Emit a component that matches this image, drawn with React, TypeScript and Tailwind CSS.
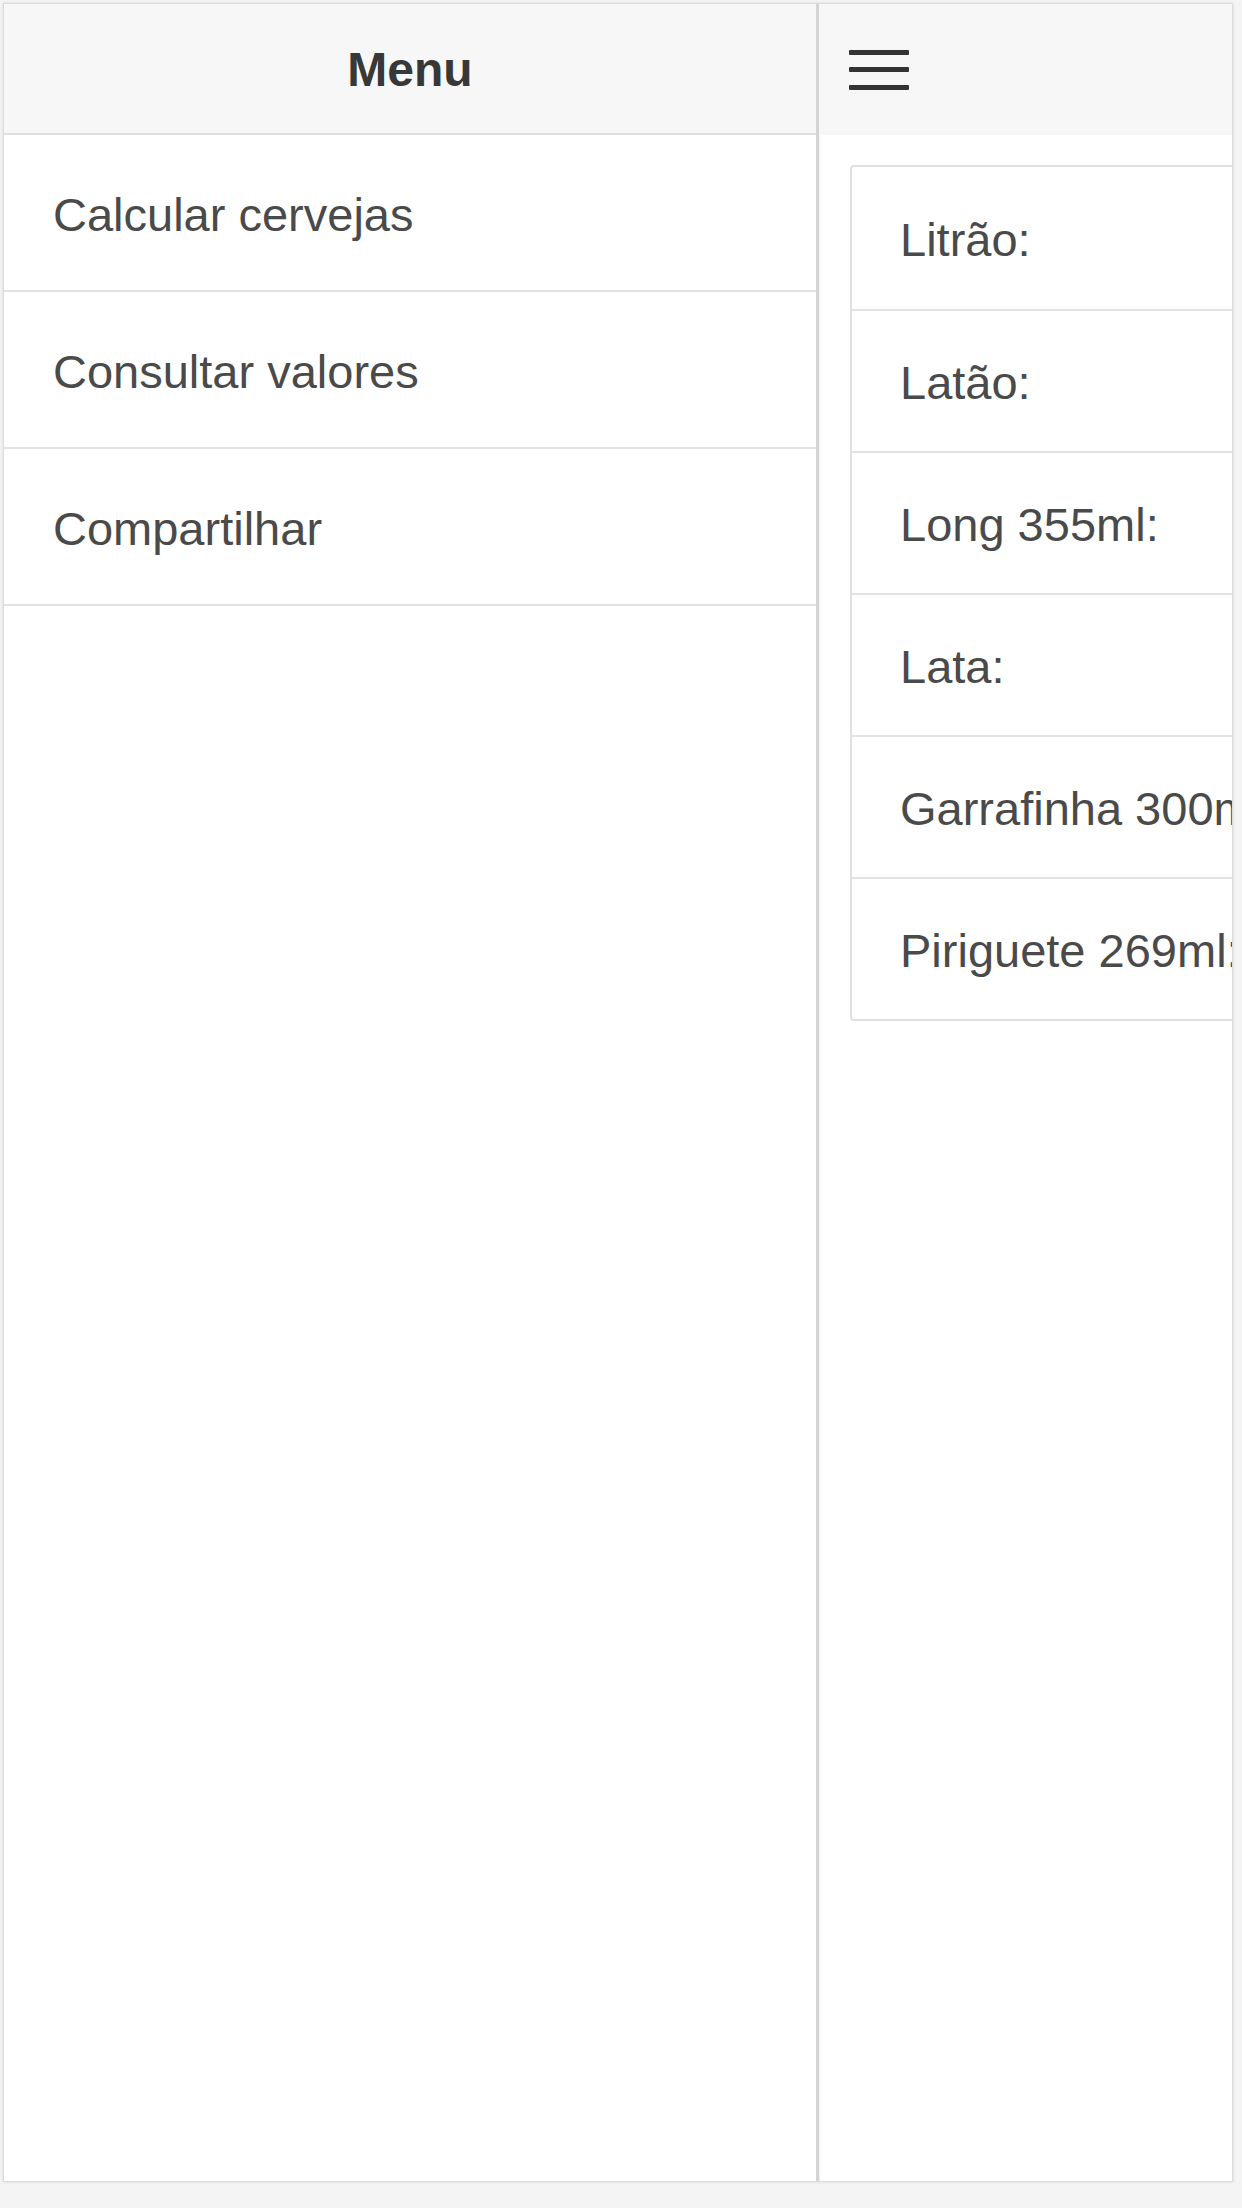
import { useState } from "react";

const menuItems = ["Calcular cervejas", "Consultar valores", "Compartilhar"];

const beers = [
	"Litrão:",
	"Latão:",
	"Long 355ml:",
	"Lata:",
	"Garrafinha 300ml:",
	"Piriguete 269ml:",
];

function HamburgerIcon() {
	return (
		<svg width="62" height="46" viewBox="0 0 62 46">
			<rect x="0" y="3" width="60" height="5" rx="1" fill="#333" />
			<rect x="0" y="20" width="60" height="5" rx="1" fill="#333" />
			<rect x="0" y="38" width="60" height="5" rx="1" fill="#333" />
		</svg>
	);
}

export default function App() {
	const [active, setActive] = useState<number | null>(null);

	return (
		<div
			className="w-[1242px] h-[2208px] bg-[#f4f4f4] pt-[3px] pl-[3px] pr-[9px] pb-[26px]"
			style={{ fontFamily: '"Liberation Sans", Arial, Helvetica, sans-serif' }}
		>
			<div className="h-full flex overflow-hidden bg-white border border-[#dcdcdc] shadow-[0_0_3px_rgba(0,0,0,0.12)]">
				{/* side menu */}
				<div className="w-[815px] shrink-0 flex flex-col border-r-[3px] border-[#d4d4d4] shadow-[1px_0_2px_rgba(0,0,0,0.08)]">
					<div className="h-[131px] shrink-0 bg-[#f7f7f7] border-b-2 border-[#e0e0e0] flex items-center justify-center pt-[2px]">
						<span className="text-[48px] font-bold text-[#383838]">Menu</span>
					</div>
					{menuItems.map((item, i) => (
						<div
							key={item}
							onClick={() => setActive(i)}
							className={`h-[157px] shrink-0 flex items-center pl-[49px] pt-[5px] border-b-2 border-[#e2e2e2] text-[47px] text-[#4a4a4a] cursor-pointer ${
								active === i ? "bg-[#f2f2f2]" : "bg-white"
							}`}
						>
							{item}
						</div>
					))}
				</div>

				{/* main content, pushed aside */}
				<div className="flex-1 min-w-0 flex flex-col">
					<div className="h-[131px] shrink-0 bg-[#f7f7f7] flex items-center pl-[30px]">
						<HamburgerIcon />
					</div>
					<div className="pt-[30px] pl-[31px]">
						<div className="w-[700px] rounded-[4px] border-2 border-[#e0e0e0] bg-white">
							{beers.map((b, i) => (
								<div
									key={b}
									className={`h-[142px] flex items-center pl-[48px] pt-[5px] text-[47px] text-[#4a4a4a] whitespace-nowrap ${
										i > 0 ? "border-t-2 border-[#e2e2e2]" : ""
									}`}
								>
									{b}
								</div>
							))}
						</div>
					</div>
				</div>
			</div>
		</div>
	);
}
